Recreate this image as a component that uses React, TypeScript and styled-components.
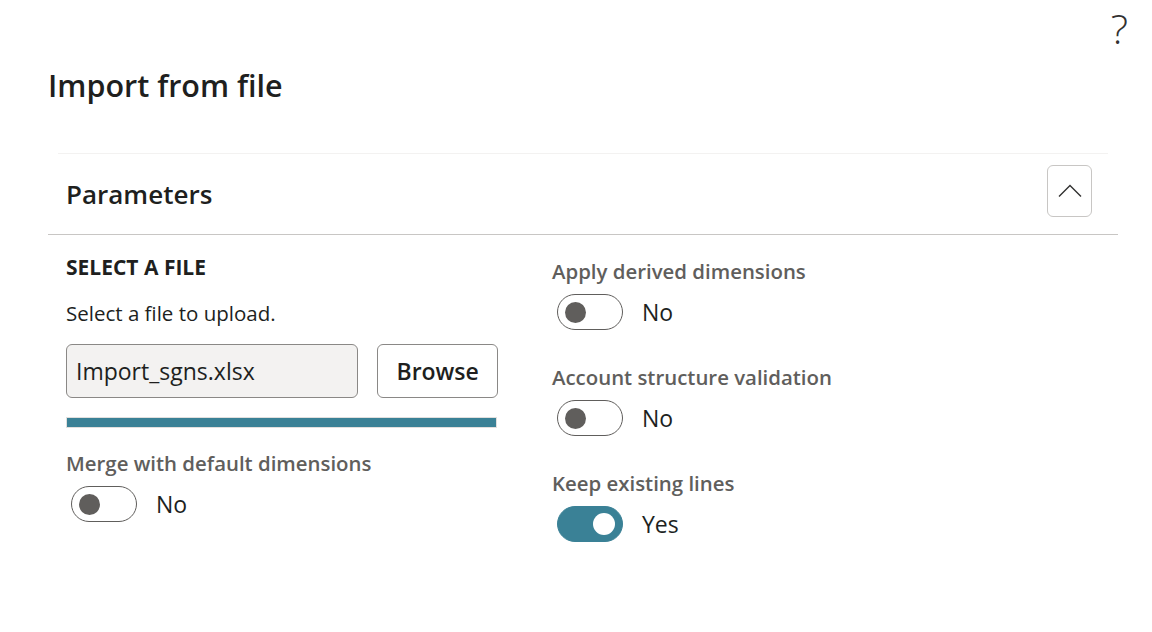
import React from "react";
import styled, { createGlobalStyle } from "styled-components";

const Global = createGlobalStyle`
  html, body { margin: 0; padding: 0; background: #ffffff; }
  body { font-family: "Open Sans", "Noto Sans", "Liberation Sans", sans-serif; color: #201f1e; }
  * { box-sizing: border-box; }
`;

const Page = styled.div`
  width: 1152px;
  height: 632px;
  display: flex;
  flex-direction: column;
  padding: 0 34px 0 48px;
`;

const TopBar = styled.div`
  height: 52px;
  display: flex;
  justify-content: flex-end;
  align-items: flex-start;
  padding-top: 6px;
`;

const HelpButton = styled.span`
  font-size: 41px;
  font-weight: 300;
  line-height: 44px;
  color: #323130;
  margin-right: -10px;
`;

const Title = styled.h1`
  margin: 0;
  font-size: 30.5px;
  font-weight: 600;
  line-height: 40px;
  height: 101px;
  padding-top: 13px;
  color: #201f1e;
`;

const Section = styled.section`
  width: 1070px;
  display: flex;
  flex-direction: column;
`;

const SectionHeader = styled.div`
  margin: 0 10px;
  border-top: 1px solid #f3f2f1;
  height: 81px;
  display: flex;
  align-items: center;
  justify-content: space-between;
  padding: 0 16px 0 8px;
`;

const SectionTitle = styled.h2`
  margin: 0;
  font-size: 26px;
  font-weight: 600;
  color: #201f1e;
`;

const CollapseButton = styled.button`
  width: 45px;
  height: 52px;
  margin-bottom: 6px;
  border: 1px solid #c8c6c4;
  border-radius: 6px;
  background: #ffffff;
  display: flex;
  align-items: center;
  justify-content: center;
  padding: 0;
`;

const Divider = styled.div`
  height: 1px;
  background: #c8c6c4;
`;

const Body = styled.div`
  display: grid;
  grid-template-columns: 432px 1fr;
  column-gap: 54px;
  padding: 19px 0 0 18px;
`;

const Column = styled.div`
  display: flex;
  flex-direction: column;
`;

const GroupLabel = styled.div`
  font-size: 21px;
  font-weight: 700;
  line-height: 26px;
  color: #201f1e;
`;

const Hint = styled.div`
  font-size: 20.5px;
  line-height: 26px;
  margin-top: 20px;
  color: #201f1e;
`;

const FileRow = styled.div`
  display: flex;
  gap: 19px;
  margin-top: 18px;
`;

const FileInput = styled.div`
  width: 293px;
  height: 54px;
  background: #f3f2f1;
  border: 1px solid #8a8886;
  border-radius: 6px;
  display: flex;
  align-items: center;
  padding-left: 9px;
  font-size: 23px;
  color: #201f1e;
`;

const BrowseButton = styled.button`
  width: 121px;
  height: 54px;
  background: #ffffff;
  border: 1px solid #8a8886;
  border-radius: 6px;
  font-family: inherit;
  font-size: 23px;
  font-weight: 600;
  color: #201f1e;
  padding: 0;
`;

const Progress = styled.div`
  margin-top: 19px;
  width: 431px;
  height: 11px;
  border: 1px solid #e1dfdd;
  background: #e1dfdd;
`;

const ProgressFill = styled.div`
  height: 100%;
  background: #3a8196;
`;

const Field = styled.div<{ $first?: boolean }>`
  display: flex;
  flex-direction: column;
  margin-top: ${(p) => (p.$first ? "0" : "34px")};
`;

const FieldLabel = styled.div`
  font-size: 20.4px;
  font-weight: 600;
  line-height: 26px;
  color: #605e5c;
`;

const ToggleRow = styled.div`
  display: flex;
  align-items: center;
  gap: 19px;
  margin-top: 10px;
  padding-left: 5px;
`;

const Track = styled.div<{ $on: boolean }>`
  width: 66px;
  height: 36px;
  border-radius: 18px;
  border: 1px solid ${(p) => (p.$on ? "#3a8196" : "#605e5c")};
  background: ${(p) => (p.$on ? "#3a8196" : "#ffffff")};
  display: flex;
  align-items: center;
  justify-content: ${(p) => (p.$on ? "flex-end" : "flex-start")};
  padding: 0 7px;
`;

const Knob = styled.div<{ $on: boolean }>`
  width: ${(p) => (p.$on ? "22px" : "21px")};
  height: ${(p) => (p.$on ? "22px" : "21px")};
  border-radius: 50%;
  background: ${(p) => (p.$on ? "#ffffff" : "#605e5c")};
`;

const ToggleText = styled.span`
  font-size: 23px;
  line-height: 30px;
  color: #201f1e;
`;

const Toggle: React.FC<{ on: boolean }> = ({ on }) => (
  <ToggleRow>
    <Track $on={on}>
      <Knob $on={on} />
    </Track>
    <ToggleText>{on ? "Yes" : "No"}</ToggleText>
  </ToggleRow>
);

const LeftField = styled(Field)`
  margin-top: 22px;
`;

const RightColumn = styled(Column)`
  padding-top: 4px;
`;

export default function App() {
  return (
    <>
      <Global />
      <Page>
        <TopBar>
          <HelpButton>?</HelpButton>
        </TopBar>
        <Title>Import from file</Title>
        <Section>
          <SectionHeader>
            <SectionTitle>Parameters</SectionTitle>
            <CollapseButton aria-label="Collapse">
              <svg width="24" height="14" viewBox="0 0 24 14" fill="none">
                <path d="M1 12.5 L12 1.5 L23 12.5" stroke="#323130" strokeWidth="1.4" />
              </svg>
            </CollapseButton>
          </SectionHeader>
          <Divider />
          <Body>
            <Column>
              <GroupLabel>SELECT A FILE</GroupLabel>
              <Hint>Select a file to upload.</Hint>
              <FileRow>
                <FileInput>Import_sgns.xlsx</FileInput>
                <BrowseButton>Browse</BrowseButton>
              </FileRow>
              <Progress>
                <ProgressFill style={{ width: "100%" }} />
              </Progress>
              <LeftField>
                <FieldLabel>Merge with default dimensions</FieldLabel>
                <Toggle on={false} />
              </LeftField>
            </Column>
            <RightColumn>
              <Field $first>
                <FieldLabel>Apply derived dimensions</FieldLabel>
                <Toggle on={false} />
              </Field>
              <Field>
                <FieldLabel>Account structure validation</FieldLabel>
                <Toggle on={false} />
              </Field>
              <Field>
                <FieldLabel>Keep existing lines</FieldLabel>
                <Toggle on={true} />
              </Field>
            </RightColumn>
          </Body>
        </Section>
      </Page>
    </>
  );
}
